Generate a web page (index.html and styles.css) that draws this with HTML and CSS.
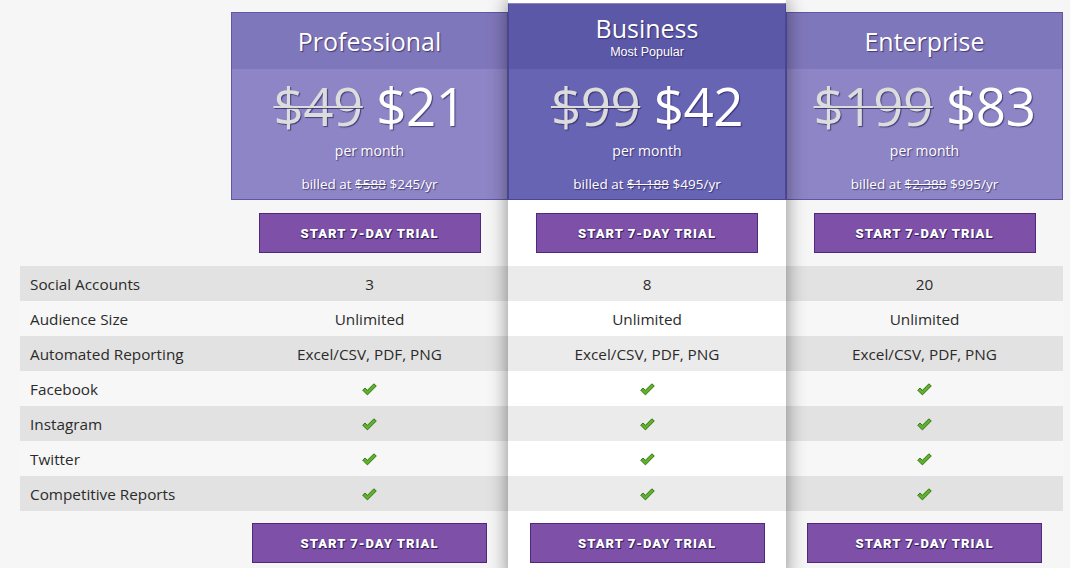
FILE: index.html
```html
<!DOCTYPE html>
<html>
<head>
<meta charset="utf-8">
<link rel="stylesheet" href="styles.css">
</head>
<body>
<div class="pricing">
  <div class="col labels">
    <div class="label-spacer"></div>
    <div class="row">Social Accounts</div>
    <div class="row">Audience Size</div>
    <div class="row">Automated Reporting</div>
    <div class="row">Facebook</div>
    <div class="row">Instagram</div>
    <div class="row">Twitter</div>
    <div class="row">Competitive Reports</div>
  </div>

  <div class="col plan">
    <div class="head">
      <div class="title"><span class="name">Professional</span></div>
      <div class="price-box">
        <div class="price"><s>$49</s> $21</div>
        <div class="per">per month</div>
        <div class="billed">billed at <s>$588</s> $245/yr</div>
      </div>
    </div>
    <div class="cta"><a class="btn">Start 7-Day Trial</a></div>
    <div class="row">3</div>
    <div class="row">Unlimited</div>
    <div class="row">Excel/CSV, PDF, PNG</div>
    <div class="row"><svg class="check" viewBox="0 0 15 13"><path d="M0.7 7.2 L3 5 L5.4 7.3 L11.9 0.8 L14.3 3 L5.4 11.9 Z"/></svg></div>
    <div class="row"><svg class="check" viewBox="0 0 15 13"><path d="M0.7 7.2 L3 5 L5.4 7.3 L11.9 0.8 L14.3 3 L5.4 11.9 Z"/></svg></div>
    <div class="row"><svg class="check" viewBox="0 0 15 13"><path d="M0.7 7.2 L3 5 L5.4 7.3 L11.9 0.8 L14.3 3 L5.4 11.9 Z"/></svg></div>
    <div class="row"><svg class="check" viewBox="0 0 15 13"><path d="M0.7 7.2 L3 5 L5.4 7.3 L11.9 0.8 L14.3 3 L5.4 11.9 Z"/></svg></div>
    <div class="cta bottom"><a class="btn wide">Start 7-Day Trial</a></div>
  </div>

  <div class="col plan featured">
    <div class="head">
      <div class="title"><span class="name">Business</span><span class="popular">Most Popular</span></div>
      <div class="price-box">
        <div class="price"><s>$99</s> $42</div>
        <div class="per">per month</div>
        <div class="billed">billed at <s>$1,188</s> $495/yr</div>
      </div>
    </div>
    <div class="cta"><a class="btn">Start 7-Day Trial</a></div>
    <div class="row">8</div>
    <div class="row">Unlimited</div>
    <div class="row">Excel/CSV, PDF, PNG</div>
    <div class="row"><svg class="check" viewBox="0 0 15 13"><path d="M0.7 7.2 L3 5 L5.4 7.3 L11.9 0.8 L14.3 3 L5.4 11.9 Z"/></svg></div>
    <div class="row"><svg class="check" viewBox="0 0 15 13"><path d="M0.7 7.2 L3 5 L5.4 7.3 L11.9 0.8 L14.3 3 L5.4 11.9 Z"/></svg></div>
    <div class="row"><svg class="check" viewBox="0 0 15 13"><path d="M0.7 7.2 L3 5 L5.4 7.3 L11.9 0.8 L14.3 3 L5.4 11.9 Z"/></svg></div>
    <div class="row"><svg class="check" viewBox="0 0 15 13"><path d="M0.7 7.2 L3 5 L5.4 7.3 L11.9 0.8 L14.3 3 L5.4 11.9 Z"/></svg></div>
    <div class="cta bottom"><a class="btn wide">Start 7-Day Trial</a></div>
  </div>

  <div class="col plan">
    <div class="head">
      <div class="title"><span class="name">Enterprise</span></div>
      <div class="price-box">
        <div class="price"><s>$199</s> $83</div>
        <div class="per">per month</div>
        <div class="billed">billed at <s>$2,388</s> $995/yr</div>
      </div>
    </div>
    <div class="cta"><a class="btn">Start 7-Day Trial</a></div>
    <div class="row">20</div>
    <div class="row">Unlimited</div>
    <div class="row">Excel/CSV, PDF, PNG</div>
    <div class="row"><svg class="check" viewBox="0 0 15 13"><path d="M0.7 7.2 L3 5 L5.4 7.3 L11.9 0.8 L14.3 3 L5.4 11.9 Z"/></svg></div>
    <div class="row"><svg class="check" viewBox="0 0 15 13"><path d="M0.7 7.2 L3 5 L5.4 7.3 L11.9 0.8 L14.3 3 L5.4 11.9 Z"/></svg></div>
    <div class="row"><svg class="check" viewBox="0 0 15 13"><path d="M0.7 7.2 L3 5 L5.4 7.3 L11.9 0.8 L14.3 3 L5.4 11.9 Z"/></svg></div>
    <div class="row"><svg class="check" viewBox="0 0 15 13"><path d="M0.7 7.2 L3 5 L5.4 7.3 L11.9 0.8 L14.3 3 L5.4 11.9 Z"/></svg></div>
    <div class="cta bottom"><a class="btn wide">Start 7-Day Trial</a></div>
  </div>
</div>
</body>
</html>
```

FILE: styles.css
```css
* { box-sizing: border-box; }
html, body {
  margin: 0;
  background: #f6f6f6;
  height: 568px;
  overflow: hidden;
  font-family: "Open Sans", "Liberation Sans", sans-serif;
  color: #2b2b2b;
}
.pricing {
  display: flex;
  align-items: flex-start;
  padding-left: 20px;
  height: 568px;
}
.col { display: flex; flex-direction: column; }
.labels { width: 211px; }
.label-spacer { height: 266px; }
.plan { width: 277px; }
.featured {
  width: 278px;
  background: #fff;
  position: relative;
  z-index: 2;
  height: 580px;
  box-shadow: 0 0 18px rgba(0, 0, 0, 0.45);
}

.row {
  height: 35px;
  display: flex;
  align-items: center;
  justify-content: center;
  font-size: 15.3px;
  color: #2b2b2b;
  background: #f7f7f7;
  padding-top: 1px;
}
.labels .row { justify-content: flex-start; padding-left: 10px; }
.labels .row:nth-of-type(even) { background: #e2e2e2; }
.labels .row:nth-of-type(odd) { background: #f7f7f7; }
.plan .row:nth-child(3), .plan .row:nth-child(5), .plan .row:nth-child(7), .plan .row:nth-child(9) { background: #e2e2e2; }
.plan .row:nth-child(4), .plan .row:nth-child(6), .plan .row:nth-child(8) { background: #f7f7f7; }
.featured .row:nth-child(3), .featured .row:nth-child(5), .featured .row:nth-child(7), .featured .row:nth-child(9) { background: #ebebeb; }
.featured .row:nth-child(4), .featured .row:nth-child(6), .featured .row:nth-child(8) { background: #fff; }

.head {
  margin-top: 12px;
  border: 1px solid #5f57a5;
  color: #fff;
  text-align: center;
  text-shadow: 1px 1px 1px rgba(40, 30, 90, 0.7);
}
.title {
  height: 56px;
  background: #7f77bb;
  display: flex;
  flex-direction: column;
  align-items: center;
  justify-content: center;
}
.name { font-size: 25px; line-height: 30px; }
.price-box {
  height: 130px;
  background: #8d85c5;
  padding-top: 11px;
}
.price { font-size: 53px; line-height: 52px; letter-spacing: -0.5px; }
.price s { color: #dcdcdc; text-decoration-thickness: 2px; }
.per { font-size: 14px; line-height: 20px; margin-top: 9px; }
.billed { font-size: 13.5px; line-height: 20px; margin-top: 13px; }
.billed s { text-decoration-thickness: 1px; }

.featured .head {
  margin-top: 3px;
  border-color: #4a479a;
  border-top-color: #8a88c4;
}
.featured .title {
  height: 65px;
  background: #5a58a7;
  justify-content: flex-start;
  padding-top: 9px;
}
.featured .name { line-height: 30px; }
.popular {
  font-family: "Liberation Sans", Arial, sans-serif;
  font-size: 12.5px;
  line-height: 15px;
  margin-top: 2px;
}
.featured .price-box { background: #6764b4; }

.cta {
  height: 66px;
  display: flex;
  justify-content: center;
  padding-top: 13px;
}
.cta.bottom { height: auto; padding-top: 12px; }
.btn {
  display: flex;
  align-items: center;
  justify-content: center;
  width: 222px;
  height: 40px;
  background: #7e50a8;
  border: 1px solid #4e2a7d;
  color: #fff;
  font-family: Roboto, "DejaVu Sans", sans-serif;
  font-weight: 900;
  font-size: 13px;
  letter-spacing: 1px;
  text-transform: uppercase;
  text-shadow: 1px 1px 0 #3a1f5c, 0 1px 1px #3a1f5c;
}
.btn.wide { width: 235px; }

.check { width: 15px; height: 13px; }
.check path { fill: #5fb22a; stroke: #2f6b12; stroke-width: 0.9; stroke-linejoin: round; }
```
